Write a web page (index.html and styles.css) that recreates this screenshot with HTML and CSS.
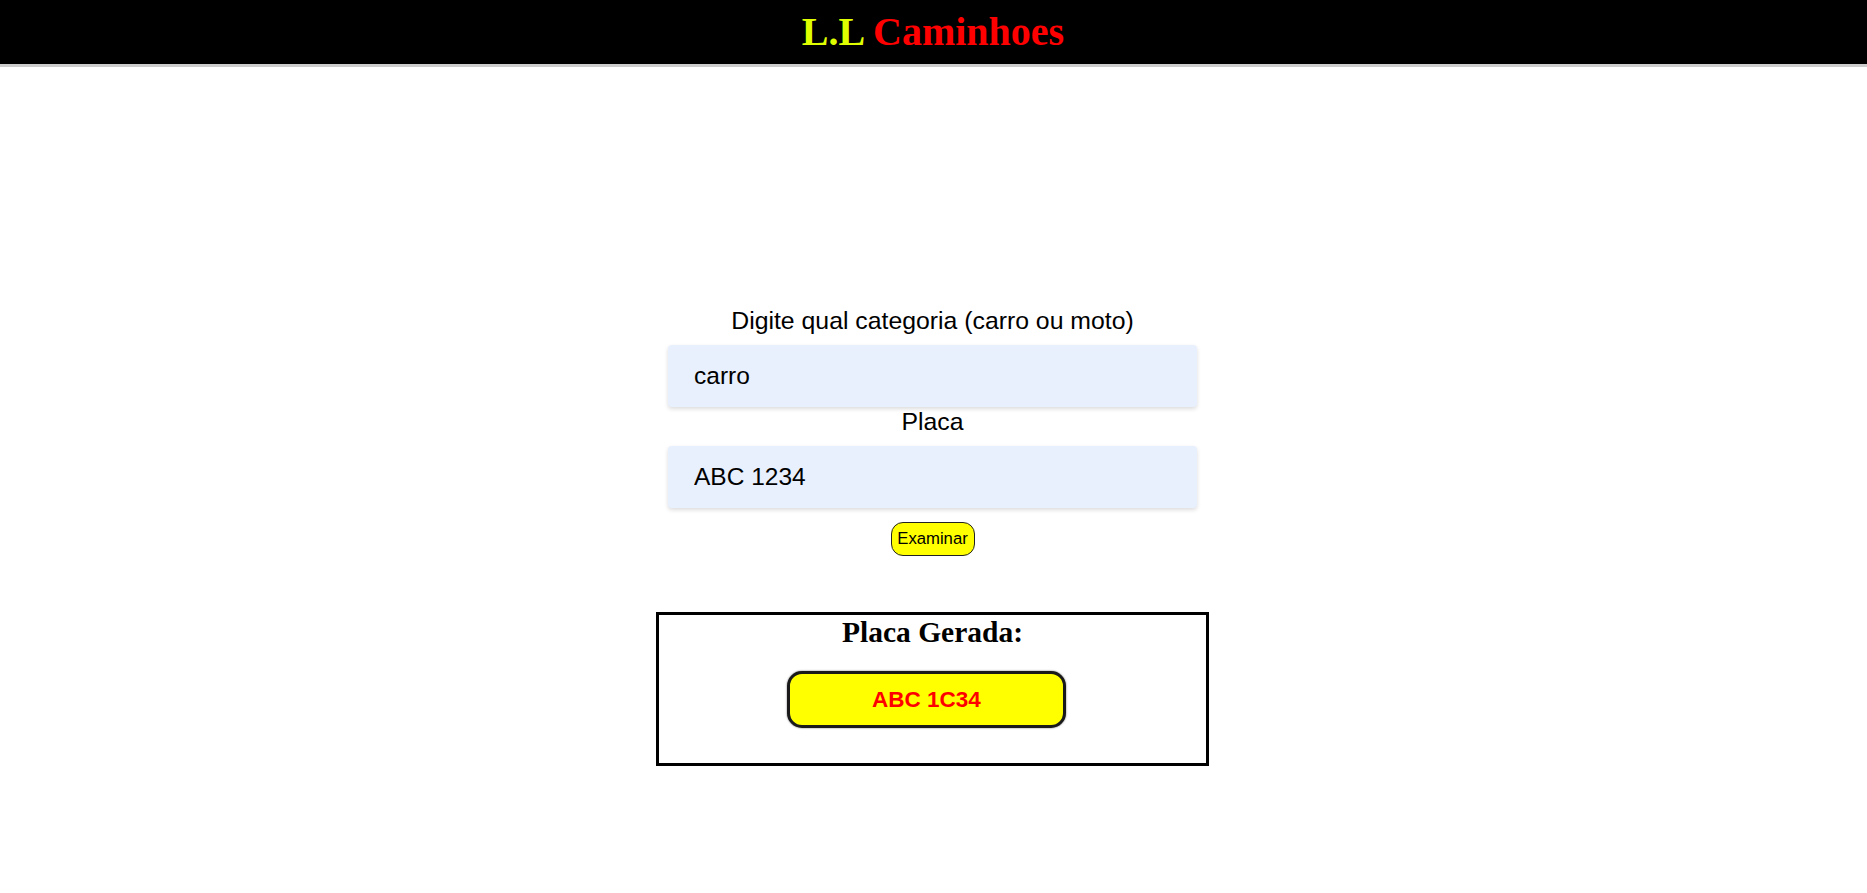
FILE: index.html
```html
<!DOCTYPE html>
<html lang="pt">
<head>
<meta charset="utf-8">
<title>L.L Caminhoes</title>
<link rel="stylesheet" href="styles.css">
</head>
<body>
<header class="topbar">
  <h1 class="brand"><span class="brand-ll">L.L</span> <span class="brand-name">Caminhoes</span></h1>
</header>
<main class="main">
  <form class="form" onsubmit="return false;">
    <label class="label" for="cat">Digite qual categoria (carro ou moto)</label>
    <input class="field" id="cat" type="text" value="carro">
    <label class="label" for="placa">Placa</label>
    <input class="field" id="placa" type="text" value="ABC 1234">
    <button class="btn" type="button">Examinar</button>
  </form>
  <section class="result">
    <h2 class="result-title">Placa Gerada:</h2>
    <div class="plate">ABC 1C34</div>
  </section>
</main>
</body>
</html>
```
FILE: styles.css
```css
* { box-sizing: border-box; }
html, body { margin: 0; padding: 0; background: #ffffff; }
body { font-family: "Liberation Sans", Arial, sans-serif; color: #000; }

.topbar {
  height: 67px;
  background: #000;
  border-bottom: 3px solid #cccccc;
  display: flex;
  justify-content: center;
  padding-right: 1px;
}
.brand {
  margin: 0;
  font-family: "Liberation Serif", "Times New Roman", serif;
  font-weight: bold;
  font-size: 40px;
  line-height: 64px;
  height: 64px;
}
.brand-ll { color: #dfff00; }
.brand-name { color: #ff0000; }

.main {
  padding-top: 239px;
  padding-right: 2px;
  display: flex;
  flex-direction: column;
  align-items: center;
}
.form {
  width: 529px;
  display: flex;
  flex-direction: column;
  align-items: center;
}
.label {
  display: block;
  font-size: 24.8px;
  line-height: 29px;
  height: 29px;
  margin-bottom: 10px;
  text-align: center;
}
.field {
  width: 529px;
  height: 62px;
  border: none;
  border-radius: 4px;
  background: #e8f0fe;
  box-shadow: 0 2px 4px rgba(0, 0, 0, 0.14);
  padding: 0 0 0 26px;
  font-family: "Liberation Sans", Arial, sans-serif;
  font-size: 24.5px;
  color: #000;
  outline: none;
}
.btn {
  margin-top: 14px;
  height: 34px;
  width: 84px;
  padding: 0;
  background: #ffff00;
  border: 1.25px solid #222;
  border-radius: 12px;
  font-family: "Liberation Sans", Arial, sans-serif;
  font-size: 16.7px;
  color: #000;
}
.result {
  margin-top: 56px;
  width: 553px;
  height: 154px;
  border: 3px solid #000;
}
.result-title {
  margin: 0;
  font-family: "Liberation Serif", "Times New Roman", serif;
  font-weight: bold;
  font-size: 29.5px;
  line-height: 34px;
  text-align: center;
}
.plate {
  margin: 22px 0 0 128px;
  width: 279px;
  height: 57px;
  background: #ffff00;
  border: 3px solid #1a1a1a;
  border-radius: 15px;
  box-shadow: 0 0 2px rgba(0, 0, 0, 0.6);
  color: #ff0000;
  font-weight: bold;
  font-size: 22.5px;
  line-height: 51px;
  text-align: center;
}
```
